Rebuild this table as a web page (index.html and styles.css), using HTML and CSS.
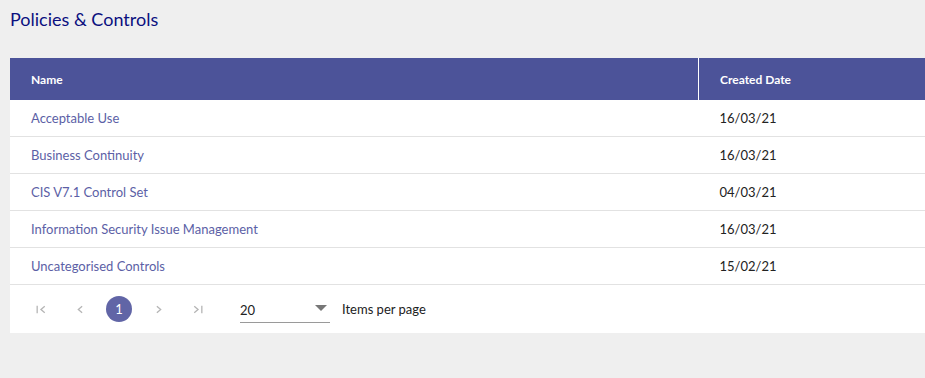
FILE: index.html
```html
<!DOCTYPE html>
<html lang="en">
<head>
    <meta charset="UTF-8">
    <meta name="viewport" content="width=device-width, initial-scale=1.0">
    <title>Policies &amp; Controls</title>
    <link rel="stylesheet" href="styles.css">
</head>
<body>
    <h1 class="page-title">Policies &amp; Controls</h1>

    <div class="grid-card">
        <table class="grid">
            <thead>
                <tr>
                    <th class="col-name">Name</th>
                    <th class="col-date">Created Date</th>
                </tr>
            </thead>
            <tbody>
                <tr><td><a href="#">Acceptable Use</a></td><td>16/03/21</td></tr>
                <tr><td><a href="#">Business Continuity</a></td><td>16/03/21</td></tr>
                <tr><td><a href="#">CIS V7.1 Control Set</a></td><td>04/03/21</td></tr>
                <tr><td><a href="#">Information Security Issue Management</a></td><td>16/03/21</td></tr>
                <tr><td><a href="#">Uncategorised Controls</a></td><td>15/02/21</td></tr>
            </tbody>
        </table>

        <div class="pager">
            <div class="pager-nav">
                <button class="pager-btn" title="First page">
                    <svg width="12" height="12" viewBox="0 0 12 12"><path d="M2 2.5v7" stroke="currentColor" stroke-width="1.2" fill="none"/><path d="M9 3L5.5 6 9 9" stroke="currentColor" stroke-width="1.2" fill="none"/></svg>
                </button>
                <button class="pager-btn" title="Previous page">
                    <svg width="12" height="12" viewBox="0 0 12 12"><path d="M7.5 3L4 6l3.5 3" stroke="currentColor" stroke-width="1.2" fill="none"/></svg>
                </button>
                <button class="pager-btn current">1</button>
                <button class="pager-btn" title="Next page">
                    <svg width="12" height="12" viewBox="0 0 12 12"><path d="M4.5 3L8 6 4.5 9" stroke="currentColor" stroke-width="1.2" fill="none"/></svg>
                </button>
                <button class="pager-btn" title="Last page">
                    <svg width="12" height="12" viewBox="0 0 12 12"><path d="M3 3l3.5 3L3 9" stroke="currentColor" stroke-width="1.2" fill="none"/><path d="M10 2.5v7" stroke="currentColor" stroke-width="1.2" fill="none"/></svg>
                </button>
            </div>
            <div class="page-size">
                <span class="page-size-value">20</span>
                <span class="page-size-arrow"></span>
            </div>
            <span class="page-size-label">Items per page</span>
        </div>
    </div>
</body>
</html>
```

FILE: styles.css
```css
body {
    font-family: Lato, 'Open Sans', sans-serif;
    background-color: #efefef;
    margin: 0;
    padding: 0;
    color: #222;
}
.page-title {
    margin: 0;
    padding: 8px 10px 0;
    height: 58px;
    box-sizing: border-box;
    font-size: 18px;
    font-weight: 400;
    color: #0b0f7f;
}
.grid-card {
    margin-left: 10px;
    background-color: #fff;
}
.grid {
    width: 100%;
    border-collapse: collapse;
}
.grid th {
    background-color: #4c5399;
    color: #fff;
    font-size: 12px;
    font-weight: 700;
    text-align: left;
    height: 42px;
    padding: 0 21px;
}
.grid .col-name {
    width: 646px;
    border-right: 1px solid #fff;
}
.grid td {
    height: 36px;
    padding: 0 21px;
    font-size: 13px;
    border-bottom: 1px solid #e2e2e2;
    color: #222;
}
.grid td a {
    color: #5c5fa6;
    text-decoration: none;
}
.pager {
    display: flex;
    align-items: center;
    height: 48px;
    padding-left: 18px;
}
.pager-nav {
    display: flex;
    gap: 13px;
}
.pager-btn {
    width: 26px;
    height: 26px;
    border: none;
    border-radius: 50%;
    background: none;
    color: #b5b5b5;
    padding: 0;
    display: flex;
    align-items: center;
    justify-content: center;
    font-family: inherit;
    font-size: 13px;
    cursor: pointer;
}
.pager-btn svg {
    width: 13px;
    height: 13px;
}
.pager-btn.current {
    background-color: #6165a6;
    color: #fff;
}
.page-size {
    display: flex;
    align-items: center;
    justify-content: space-between;
    width: 90px;
    margin-left: 30px;
    height: 26px;
    border-bottom: 1px solid #9a9a9a;
    box-sizing: border-box;
    margin-top: 2px;
    font-size: 13px;
}
.page-size-arrow {
    width: 0;
    height: 0;
    border-left: 6px solid transparent;
    border-right: 6px solid transparent;
    border-top: 6px solid #777;
    margin-right: 3px;
    margin-top: -4px;
}
.page-size-label {
    margin-left: 12px;
    font-size: 13px;
}
```
